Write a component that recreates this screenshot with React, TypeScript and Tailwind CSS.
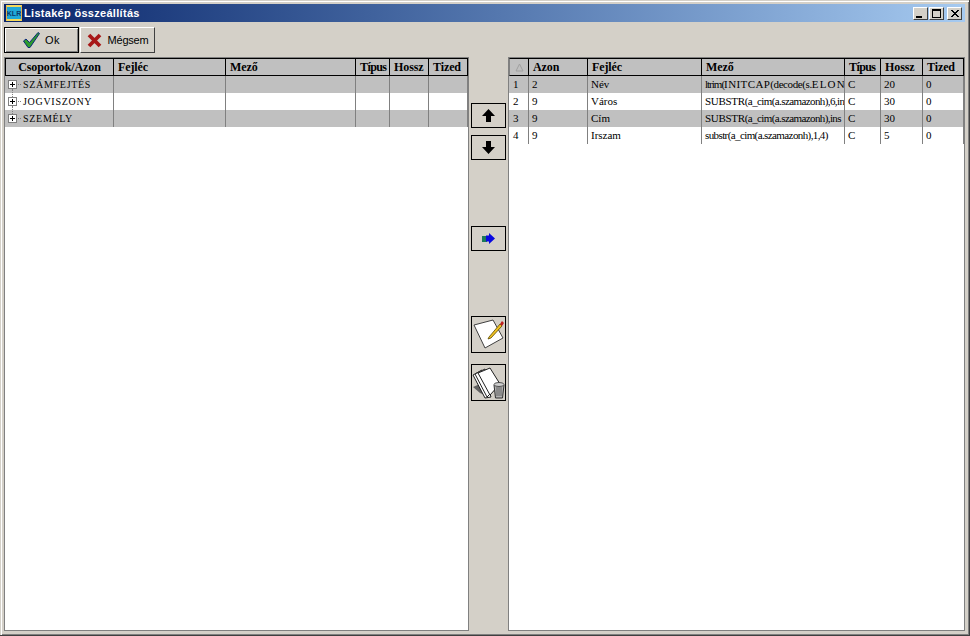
import { ReactNode } from 'react';

const serif = { fontFamily: '"Liberation Serif", serif' };
const sans = { fontFamily: '"Liberation Sans", sans-serif' };

const leftRows = [
  { name: 'SZÁMFEJTÉS', shade: true, next: true },
  { name: 'JOGVISZONY', shade: false, next: true },
  { name: 'SZEMÉLY', shade: true, next: false },
];

const rightRows = [
  { no: '1', azon: '2', fejlec: 'Név', tipus: 'C', hossz: '20', mezo: (
    <>
      <span className="tracking-[-1px]">ltrim(</span>
      <span className="tracking-[0.4px]">INITCAP</span>
      <span className="tracking-[-0.4px]">(decode(s.</span>
      <span className="tracking-[1.2px]">ELONT</span>
    </>
  ) },
  { no: '2', azon: '9', fejlec: 'Város', tipus: 'C', hossz: '30', mezo: (
    <>
      <span className="tracking-[-0.3px]">SUBSTR</span>
      <span>(a_cim(a.szamazonh),6,in</span>
    </>
  ) },
  { no: '3', azon: '9', fejlec: 'Cím', tipus: 'C', hossz: '30', mezo: (
    <>
      <span className="tracking-[-0.3px]">SUBSTR</span>
      <span>(a_cim(a.szamazonh),ins</span>
    </>
  ) },
  { no: '4', azon: '9', fejlec: 'Irszam', tipus: 'C', hossz: '5', mezo: <span>substr(a_cim(a.szamazonh),1,4)</span> },
];

function CaptionButton({ children }: { children: ReactNode }) {
  return (
    <div className="w-[15px] h-[13px] bg-[#d4d0c8] border border-t-white border-l-white border-r-[#404040] border-b-[#404040] flex items-center justify-center">
      {children}
    </div>
  );
}

function HeadCell({ children, center }: { children?: ReactNode; center?: boolean }) {
  return (
    <div className={`h-full border-r border-black overflow-hidden whitespace-nowrap text-[12px] font-bold tracking-[-0.1px] text-black leading-[16px] ${center ? 'text-center' : 'pl-1'}`}>
      {children}
    </div>
  );
}

function Cell({ children, tight }: { children?: ReactNode; tight?: boolean }) {
  return (
    <div className={`h-[17px] border-r border-[#808080] overflow-hidden whitespace-nowrap pl-[3px] text-[11px] leading-[17px] text-black ${tight ? 'tracking-[-0.6px]' : ''}`}>
      {children}
    </div>
  );
}

function PlusBox() {
  return (
    <svg width="9" height="9" viewBox="0 0 9 9" className="shrink-0">
      <rect x="0.5" y="0.5" width="8" height="8" fill="#ffffff" stroke="#808080" />
      <path d="M2 4.5H7M4.5 2V7" stroke="#000000" />
    </svg>
  );
}

function SideButton({ h, mt, children }: { h: string; mt: string; children: ReactNode }) {
  return (
    <div className={`w-[35px] ${h} ${mt} bg-[#d4d0c8] border border-black flex items-center justify-center`}>
      {children}
    </div>
  );
}

export default function App() {
  return (
    <div className="w-[970px] h-[636px] bg-[#d4d0c8] border-r border-b border-r-[#404040] border-b-[#404040] shadow-[inset_1px_1px_0_#d4d0c8,inset_2px_2px_0_#ffffff,inset_-1px_-1px_0_#808080] flex flex-col overflow-hidden" style={serif}>
      {/* title bar */}
      <div className="mx-1 mt-1 h-[18px] shrink-0 bg-gradient-to-r from-[#0a246a] to-[#a6caf0] flex items-center pl-[2px] pr-[3px]">
        <div className="w-4 h-4 bg-[#1fa8d8] border-y-2 border-x border-y-[#f4d85a] border-x-[#e0b050] flex items-center justify-center text-[7px] font-bold text-[#0c3a6c] leading-none overflow-hidden" style={sans}>
          KLR
        </div>
        <span className="ml-[2px] text-[11px] font-bold text-white tracking-[0.3px]" style={sans}>
          Listakép összeállítás
        </span>
        <div className="ml-auto flex items-center">
          <CaptionButton>
            <div className="w-[6px] h-[2px] bg-black mt-[7px] -ml-[3px]" />
          </CaptionButton>
          <div className="ml-px">
            <CaptionButton>
              <div className="w-[9px] h-[9px] border border-black border-t-2" />
            </CaptionButton>
          </div>
          <div className="ml-[3px]">
            <CaptionButton>
              <svg width="8" height="7" viewBox="0 0 8 7">
                <path d="M0 0L7 7M1 0L8 7M7 0L0 7M8 0L1 7" stroke="#000000" strokeWidth="1" />
              </svg>
            </CaptionButton>
          </div>
        </div>
      </div>

      {/* toolbar */}
      <div className="mx-1 mt-[5px] h-[26px] shrink-0 flex" style={sans}>
        <div className="w-[75px] h-full border border-black shadow-[inset_1px_1px_0_#ffffff,inset_-1px_-1px_0_#808080] flex items-center justify-center gap-[5px] text-[11px] text-black">
          <svg width="17" height="16" viewBox="0 0 17 16">
            <path d="M0.5 9L3 7L6.5 10.5L15 0.5L16.5 1.5L7 15.5L5 15.5Z" fill="#2d9a2d" stroke="#0b2a7a" strokeWidth="1" />
          </svg>
          <span className="tracking-[0.5px]">Ok</span>
        </div>
        <div className="w-[75px] h-full ml-px border border-black border-t-white border-l-white border-r-[#404040] border-b-[#404040] flex items-center justify-center gap-[6px] text-[11px] text-black">
          <svg width="15" height="15" viewBox="0 0 15 15">
            <path d="M2 2L13 13M13 2L2 13" stroke="#a81818" strokeWidth="3.8" />
          </svg>
          <span className="tracking-[-0.2px]">Mégsem</span>
        </div>
      </div>

      {/* panes */}
      <div className="mx-1 mt-[4px] flex-1 flex min-h-0 mb-1">
        {/* left grid */}
        <div className="w-[465px] bg-white border border-[#808080]">
          <div className="h-[18px] bg-[#c0c0c0] border border-black border-r-0 grid grid-cols-[108px_112px_130px_34px_39px_39px]">
            <HeadCell center>Csoportok/Azon</HeadCell>
            <HeadCell>Fejléc</HeadCell>
            <HeadCell>Mező</HeadCell>
            <HeadCell><span className="tracking-[-0.6px]">Típus</span></HeadCell>
            <HeadCell>Hossz</HeadCell>
            <HeadCell>Tized</HeadCell>
          </div>
          {leftRows.map((row) => (
            <div key={row.name} className={`pl-px grid grid-cols-[108px_112px_130px_34px_39px_39px] ${row.shade ? 'bg-[#c0c0c0]' : 'bg-white'}`}>
              <div className="relative h-[17px] border-r border-[#808080] flex items-center pl-[2px] text-[10px] tracking-[0.7px] text-black whitespace-nowrap">
                <PlusBox />
                <div className="w-[3px] border-t border-dotted border-[#808080] ml-px mr-[2px]" />
                <span>{row.name}</span>
                {row.next && <div className="absolute left-[6px] top-[13px] h-[8px] border-l border-dotted border-[#808080]" />}
              </div>
              <Cell />
              <Cell />
              <Cell />
              <Cell />
              <Cell />
            </div>
          ))}
        </div>

        {/* middle buttons */}
        <div className="w-[39px] flex flex-col items-center">
          <SideButton h="h-[25px]" mt="mt-[46px]">
            <svg width="13" height="13" viewBox="0 0 13 13">
              <path d="M6.5 0L13 7H9V13H4V7H0Z" fill="#000000" />
            </svg>
          </SideButton>
          <SideButton h="h-[25px]" mt="mt-[7px]">
            <svg width="13" height="13" viewBox="0 0 13 13">
              <path d="M6.5 13L13 6H9V0H4V6H0Z" fill="#000000" />
            </svg>
          </SideButton>
          <SideButton h="h-[25px]" mt="mt-[66px]">
            <svg width="13" height="11" viewBox="0 0 13 11">
              <rect x="0" y="3" width="5" height="6" fill="#1c7a5a" />
              <path d="M4 2.5H7V0L13 5.5L7 11V8.5H4Z" fill="#0808e0" />
            </svg>
          </SideButton>
          <SideButton h="h-[37px]" mt="mt-[65px]">
            <svg width="33" height="35" viewBox="0 0 33 35">
              <path d="M2 8L21 3L31 21L13 31Z" fill="#ffffff" stroke="#404040" strokeWidth="1" />
              <path d="M17 20L28 7L30 9L19 21L16 22Z" fill="#f0c020" stroke="#5a4a00" strokeWidth="0.8" />
              <path d="M28 7L30 4L32 6L30 9Z" fill="#c02020" />
            </svg>
          </SideButton>
          <SideButton h="h-[37px]" mt="mt-[11px]">
            <svg width="33" height="35" viewBox="0 0 33 35">
              <path d="M1 22L10 18L17 32L8 28Z" fill="#606060" />
              <path d="M1 10L10 5L19 32L13 33Z" fill="#ffffff" stroke="#202020" strokeWidth="1" />
              <path d="M3 9L13 4L23 24L15 32Z" fill="#ffffff" stroke="#202020" strokeWidth="1" />
              <path d="M6 8L18 3L28 19L18 30Z" fill="#ffffff" stroke="#202020" strokeWidth="1" />
              <path d="M22 20H32L30.5 33H23.5Z" fill="#b0b0b0" stroke="#303030" strokeWidth="1" />
              <path d="M25 22V31M27 22V31M29 22V31" stroke="#505050" strokeWidth="0.8" />
              <ellipse cx="27" cy="19.5" rx="5" ry="2" fill="#d0d0d0" stroke="#303030" strokeWidth="0.8" />
            </svg>
          </SideButton>
        </div>

        {/* right grid */}
        <div className="flex-1 bg-white border border-[#808080]">
          <div className="h-[18px] bg-[#c0c0c0] border border-black border-r-0 border-l-[#808080] grid grid-cols-[19px_59px_114px_143px_36px_42px_41px]">
            <HeadCell center>
              <svg width="9" height="9" viewBox="0 0 9 9" className="mx-auto mt-1">
                <path d="M4.5 1L8 8H1Z" fill="none" stroke="#a0a0a0" />
              </svg>
            </HeadCell>
            <HeadCell>Azon</HeadCell>
            <HeadCell>Fejléc</HeadCell>
            <HeadCell>Mező</HeadCell>
            <HeadCell><span className="tracking-[-0.6px]">Típus</span></HeadCell>
            <HeadCell>Hossz</HeadCell>
            <HeadCell>Tized</HeadCell>
          </div>
          {rightRows.map((row, i) => (
            <div key={row.no} className={`pl-px grid grid-cols-[19px_59px_114px_143px_36px_42px_41px] ${i % 2 === 0 ? 'bg-[#c0c0c0]' : 'bg-white'}`}>
              <Cell>{row.no}</Cell>
              <Cell>{row.azon}</Cell>
              <Cell>{row.fejlec}</Cell>
              <Cell tight>{row.mezo}</Cell>
              <Cell>{row.tipus}</Cell>
              <Cell>{row.hossz}</Cell>
              <Cell>0</Cell>
            </div>
          ))}
        </div>
      </div>
    </div>
  );
}
